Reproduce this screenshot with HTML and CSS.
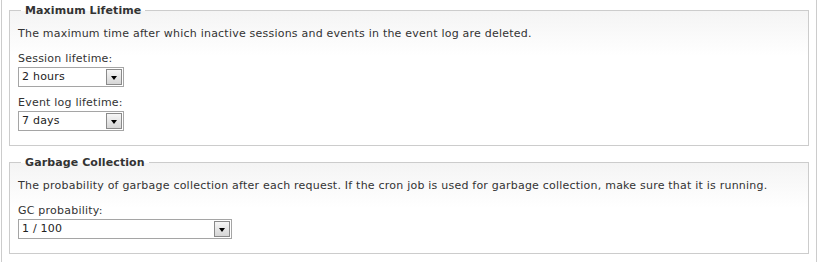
FILE: index.html
```html
<!DOCTYPE html>
<html>
<head>
<meta charset="utf-8">
<link rel="stylesheet" href="styles.css">
</head>
<body>
<div class="page">
  <fieldset class="group">
    <legend class="group-title">Maximum Lifetime</legend>
    <p class="desc">The maximum time after which inactive sessions and events in the event log are deleted.</p>
    <label class="field-label">Session lifetime:</label>
    <div class="select small"><span class="select-value">2 hours</span><span class="select-btn"><span class="arrow"></span></span></div>
    <label class="field-label">Event log lifetime:</label>
    <div class="select small"><span class="select-value">7 days</span><span class="select-btn"><span class="arrow"></span></span></div>
  </fieldset>
  <fieldset class="group">
    <legend class="group-title">Garbage Collection</legend>
    <p class="desc">The probability of garbage collection after each request. If the cron job is used for garbage collection, make sure that it is running.</p>
    <label class="field-label">GC probability:</label>
    <div class="select wide"><span class="select-value">1 / 100</span><span class="select-btn"><span class="arrow"></span></span></div>
  </fieldset>
</div>
</body>
</html>
```
FILE: styles.css
```css
html, body {
  margin: 0;
  padding: 0;
  background: #fff;
}
body {
  font-family: "DejaVu Sans", Verdana, sans-serif;
  font-size: 11px;
  letter-spacing: 0.22px;
  color: #333;
}
.page {
  margin-left: 1px;
  width: 816px;
  height: 262px;
  border-left: 1px solid #ccc;
  border-right: 1px solid #ccc;
  padding: 4px 7px 0 7px;
  box-sizing: border-box;
}
.group {
  margin: 0 0 10px 0;
  padding: 10px 8px 14px 8px;
  border: 1px solid #ccc;
  background: linear-gradient(#f4f4f4, #fff 45px);
  min-width: 0;
}
.group-title {
  font-weight: bold;
  padding: 0 4px;
  margin-left: 3px;
  color: #333;
  letter-spacing: 0.1px;
}
.desc {
  margin: 0 0 11px 0;
  line-height: 14px;
}
.field-label {
  display: block;
  line-height: 14px;
  margin-bottom: 1px;
}
.select {
  display: flex;
  height: 20px;
  box-sizing: border-box;
  border: 1px solid #a5a5a5;
  background: #fff;
  margin-bottom: 9px;
}
.select:last-child {
  margin-bottom: 0;
}
.small { width: 106px; }
.wide { width: 214px; }
.select-value {
  flex: 1;
  padding-left: 3px;
  line-height: 18px;
  color: #222;
}
.select-btn {
  width: 16px;
  margin: 1px;
  box-sizing: border-box;
  border: 1px solid #8a8a8a;
  background: linear-gradient(#f6f6f6, #d6d6d6);
  display: flex;
  align-items: center;
  justify-content: center;
}
.arrow {
  width: 0;
  height: 0;
  border-left: 3.5px solid transparent;
  border-right: 3.5px solid transparent;
  border-top: 4px solid #000;
  margin-top: 1px;
}
```
